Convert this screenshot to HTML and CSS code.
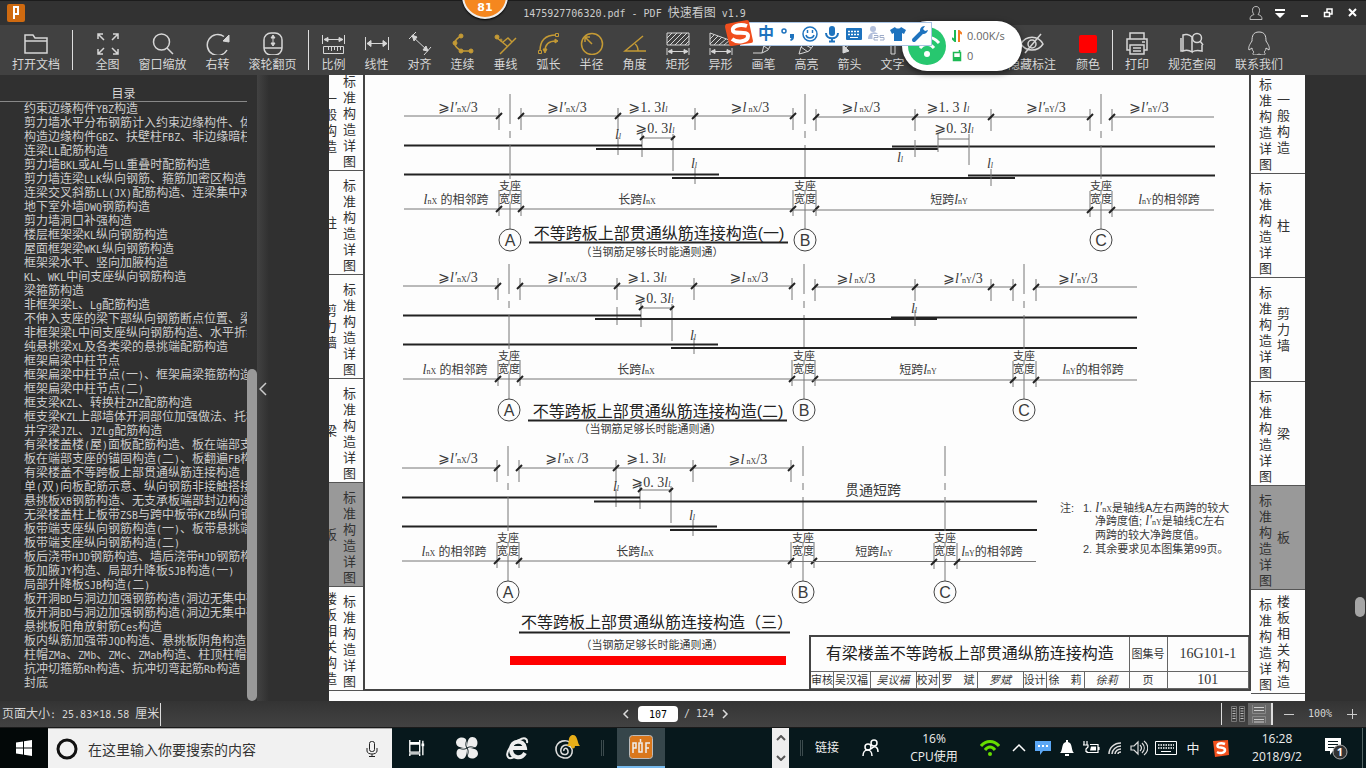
FILE: index.html
```html
<!DOCTYPE html>
<html lang="zh-CN">
<head>
<meta charset="utf-8">
<title>1475927706320.pdf - PDF 快速看图 v1.9</title>
<link rel="stylesheet" href="styles.css">
</head>
<body>
<header class="titlebar">
  <svg class="applogo" viewBox="0 0 18 18"><rect width="18" height="18" rx="2" fill="#cf6a10"/><path d="M7 15V3h4v7H8" fill="none" stroke="#fff" stroke-width="2"/></svg>
  <h1 class="doc-title"><span class="en">1475927706320.pdf - PDF </span>快速看图<span class="en"> v1.9</span></h1>
  <div class="wincontrols">
    <button aria-label="用户"><svg viewBox="0 0 16 16"><path d="M8 1.500c-3 0-3.500 2-3.500 4s1 3.500 1.500 4c-3 1-4 2-4 5h12c0-3-1-4-4-5 .5-.5 1.500-2 1.500-4s-.5-4-3.500-4z" fill="none" stroke="#bbb"/></svg></button>
    <button aria-label="菜单"><svg viewBox="0 0 16 16"><path d="M3 4h10v2H3zM3 8h10l-5 5z" fill="#fff"/></svg></button>
    <button aria-label="最小化"><svg viewBox="0 0 16 16"><path d="M5 10h7v2H5z" fill="#fff"/></svg></button>
    <button aria-label="还原"><svg viewBox="0 0 16 16"><path d="M7 7V4h5v5h-2M4.500 7.500h5v4h-5z" fill="none" stroke="#fff" stroke-width="1.500"/></svg></button>
    <button aria-label="关闭"><svg viewBox="0 0 16 16"><path d="M5 4l7 7M12 4l-7 7" stroke="#fff" stroke-width="2"/></svg></button>
  </div>
</header>

<nav class="toolbar">
  <button class="tool w72"><svg viewBox="0 0 24 24"><path class="m" d="M1 22V4h8l2 3h12v15zM1 10h22"/></svg>打开文档</button>
  <i class="sep"></i>
  <button class="tool w55 first"><svg viewBox="0 0 24 24"><path class="m" d="M2 8V3h5M2 3l6 6M17 3h5v5M22 3l-6 6M2 18v5h5M2 23l6-6M22 18v5h-5M22 23l-6-6"/></svg>全图</button>
  <button class="tool w55"><svg viewBox="0 0 24 24"><circle class="m" cx="10.500" cy="11" r="8"/><path class="m" d="M16 17l6 6"/></svg>窗口缩放</button>
  <button class="tool w55"><svg viewBox="0 0 24 24"><path class="m" d="M18 5.500A10.500 10.500 0 1 0 21 19"/><path d="M17 10l6 1V4z" fill="currentColor"/></svg>右转</button>
  <button class="tool w55"><svg viewBox="0 0 24 24"><rect class="m" x="3" y="2" width="18" height="22" rx="7"/><path class="m" d="M3 17h18"/><path d="M12 5v8M10 7l2-3 2 3zM10 12l2 3 2-3z" fill="currentColor"/></svg>滚轮翻页</button>
  <i class="sep gapped"></i>
  <button class="tool"><svg viewBox="0 0 24 24"><path d="M.5 4v9M22.500 4v9M3 8.500h18"/><path d="M2 8.500l4-2v4zM21 8.500l-4-2v4z" fill="currentColor"/><path d="M1.500 15.500h20v7h-20zM6.500 16v3M9.500 16v4M12.500 16v3M15.500 16v4M18.500 16v3"/></svg>比例</button>
  <button class="tool"><svg viewBox="0 0 24 24"><path d="M.5 6v13M23.500 6v13M2 12.500h20"/><path d="M2 12.500l4-3v6zM22 12.500l-4-3v6z" fill="currentColor"/></svg>线性</button>
  <button class="tool"><svg viewBox="0 0 24 24"><path d="M1 8l7-7M16 24l7-8M4 5l15 14"/><path d="M4 4l5 2-3 4zM20 20l-2-5-3 4z" fill="currentColor"/></svg>对齐</button>
  <button class="tool gold"><svg viewBox="0 0 24 24"><path class="m" d="M10 5C3 9 1 14 9 19M9 20h11"/><g fill="currentColor"><circle cx="10" cy="5" r="2"/><circle cx="4" cy="12" r="2"/><circle cx="10" cy="20" r="2"/><circle cx="20" cy="20" r="2"/></g></svg>连续</button>
  <button class="tool gold"><svg viewBox="0 0 24 24"><path class="m" d="M2 6l11 9M6 23L22 7M9 11l5-4 4 4"/><circle cx="3" cy="6" r="2" fill="currentColor"/><circle cx="7" cy="9" r="1"/></svg>垂线</button>
  <button class="tool gold"><svg viewBox="0 0 24 24"><path class="m" d="M3 20C3 9 9 4 19 4M8 20c0-7 4-10 11-10"/><path d="M18.500 2.500h3v3h-3zM1.500 19.500h3v3h-3z"/><path d="M18 8l3 2-3 2zM6 18l2 4 2-4z" fill="currentColor"/></svg>弧长</button>
  <button class="tool gold"><svg viewBox="0 0 24 24"><circle class="m" cx="12" cy="13" r="10.500"/><path class="m" d="M12 13L5 6M5 11V6h5"/></svg>半径</button>
  <button class="tool gold"><svg viewBox="0 0 24 24"><path class="m" d="M20 5L2 20h21M12 13c3 2 3 4 3 7"/></svg>角度</button>
  <button class="tool"><svg viewBox="0 0 24 24"><path d="M1 2h22v12H1zM1 7l5-5M1 12L11 2M4 14L16 2M9 14L21 2M14 14l9-9M19 14l4-4M1 17v7M23 17v7M3 20.500h18"/><path d="M2 20.500l4-2v4zM22 20.500l-4-2v4z" fill="currentColor"/></svg>矩形</button>
  <button class="tool"><svg viewBox="0 0 24 24"><path d="M1 2l22 8v4H1zM1 8l4-4M1 13l8-8M5 14l8-8M10 14l7-6M15 14l6-5M1 17v7M23 17v7M3 20.500h18"/><path d="M2 20.500l4-2v4zM22 20.500l-4-2v4z" fill="currentColor"/></svg>异形</button>
  <button class="tool"><svg viewBox="0 0 24 24"><path d="M1 22h9M10 22l2-8 5-10 5 4-6 11zM12 15l4 3"/></svg>画笔</button>
  <button class="tool"><svg viewBox="0 0 24 24"><path d="M4 23l2-7 8-10 7 5-7 9-6 2zM6 16l7 5M9 13l7 4"/></svg>高亮</button>
  <button class="tool"><svg viewBox="0 0 24 24"><path d="M20 3L7 18"/><path d="M5 22v-8l6 6z" fill="currentColor"/></svg>箭头</button>
  <button class="tool"><svg viewBox="0 0 24 24"><path d="M3 4h18v3h-7v16h-4V7H3z"/></svg>文字</button>
  <span class="covered"></span>
  <button class="tool w64"><svg viewBox="0 0 24 24"><path class="m" d="M1 13c5-9 17-9 22 0-5 8-17 8-22 0zM21 3L5 22"/><circle class="m" cx="12" cy="13" r="4"/></svg>隐藏标注</button>
  <button class="tool w48"><svg viewBox="0 0 24 24"><rect x="3" y="4" width="18" height="18" rx="2" fill="red" stroke="none"/></svg>颜色</button>
  <i class="sep"></i>
  <button class="tool w48"><svg viewBox="0 0 24 24"><path class="m" d="M5 8V2h14v6M5 19H2V8h20v11h-3M5 14h14v9H5zM8 17h8M8 20h8M17 11h3"/></svg>打印</button>
  <button class="tool w62"><svg viewBox="0 0 24 24"><path class="m" d="M12 6C9 3 5 3 3 4v16c3-1 6-1 9 1V6zM12 21c3-2 6-2 10-1v-6M3 20H1V7"/><circle class="m" cx="17" cy="7" r="4.500"/><path class="m" d="M20 10l3 4"/></svg>规范查阅</button>
  <button class="tool w72"><svg viewBox="0 0 24 24"><path d="M12 1c-6 0-7 4-7 9-2 3-4 6-3 9l3-2c0 2 1 3 2 4-2 2-1 3 1 3h2l2-1 2 1h2c2 0 3-1 1-3 1-1 2-2 2-4l3 2c1-3-1-6-3-9 0-5-1-9-7-9z"/></svg>联系我们</button>
</nav>

<main class="workspace">
  <aside class="outline">
    <h2 class="outline-head">目录</h2>
    <ul class="toc">
      <li><a href="#p">约束边缘构件<span class="en">YBZ</span>构造</a></li>
      <li><a href="#p">剪力墙水平分布钢筋计入约束边缘构件、体</a></li>
      <li><a href="#p">构造边缘构件<span class="en">GBZ</span>、扶壁柱<span class="en">FBZ</span>、非边缘暗柱</a></li>
      <li><a href="#p">连梁<span class="en">LL</span>配筋构造</a></li>
      <li><a href="#p">剪力墙<span class="en">BKL</span>或<span class="en">AL</span>与<span class="en">LL</span>重叠时配筋构造</a></li>
      <li><a href="#p">剪力墙连梁<span class="en">LLK</span>纵向钢筋、箍筋加密区构造</a></li>
      <li><a href="#p">连梁交叉斜筋<span class="en">LL(JX)</span>配筋构造、连梁集中对</a></li>
      <li><a href="#p">地下室外墙<span class="en">DWQ</span>钢筋构造</a></li>
      <li><a href="#p">剪力墙洞口补强构造</a></li>
      <li><a href="#p">楼层框架梁<span class="en">KL</span>纵向钢筋构造</a></li>
      <li><a href="#p">屋面框架梁<span class="en">WKL</span>纵向钢筋构造</a></li>
      <li><a href="#p">框架梁水平、竖向加腋构造</a></li>
      <li><a href="#p"><span class="en">KL</span>、<span class="en">WKL</span>中间支座纵向钢筋构造</a></li>
      <li><a href="#p">梁箍筋构造</a></li>
      <li><a href="#p">非框架梁<span class="en">L</span>、<span class="en">Lg</span>配筋构造</a></li>
      <li><a href="#p">不伸入支座的梁下部纵向钢筋断点位置、梁</a></li>
      <li><a href="#p">非框架梁<span class="en">L</span>中间支座纵向钢筋构造、水平折线</a></li>
      <li><a href="#p">纯悬挑梁<span class="en">XL</span>及各类梁的悬挑端配筋构造</a></li>
      <li><a href="#p">框架扁梁中柱节点</a></li>
      <li><a href="#p">框架扁梁中柱节点<span class="en">(</span>一<span class="en">)</span>、框架扁梁箍筋构造</a></li>
      <li><a href="#p">框架扁梁中柱节点<span class="en">(</span>二<span class="en">)</span></a></li>
      <li><a href="#p">框支梁<span class="en">KZL</span>、转换柱<span class="en">ZHZ</span>配筋构造</a></li>
      <li><a href="#p">框支梁<span class="en">KZL</span>上部墙体开洞部位加强做法、托柱</a></li>
      <li><a href="#p">井字梁<span class="en">JZL</span>、<span class="en">JZLg</span>配筋构造</a></li>
      <li><a href="#p">有梁楼盖楼<span class="en">(</span>屋<span class="en">)</span>面板配筋构造、板在端部支</a></li>
      <li><a href="#p">板在端部支座的锚固构造<span class="en">(</span>二<span class="en">)</span>、板翻遍<span class="en">FB</span>构</a></li>
      <li><a href="#p">有梁楼盖不等跨板上部贯通纵筋连接构造</a></li>
      <li class="current"><a href="#p">单<span class="en">(</span>双<span class="en">)</span>向板配筋示意、纵向钢筋非接触搭接</a></li>
      <li><a href="#p">悬挑板<span class="en">XB</span>钢筋构造、无支承板端部封边构造</a></li>
      <li><a href="#p">无梁楼盖柱上板带<span class="en">ZSB</span>与跨中板带<span class="en">KZB</span>纵向钢</a></li>
      <li><a href="#p">板带端支座纵向钢筋构造<span class="en">(</span>一<span class="en">)</span>、板带悬挑端</a></li>
      <li><a href="#p">板带端支座纵向钢筋构造<span class="en">(</span>二<span class="en">)</span></a></li>
      <li><a href="#p">板后浇带<span class="en">HJD</span>钢筋构造、墙后浇带<span class="en">HJD</span>钢筋构</a></li>
      <li><a href="#p">板加腋<span class="en">JY</span>构造、局部升降板<span class="en">SJB</span>构造<span class="en">(</span>一<span class="en">)</span></a></li>
      <li><a href="#p">局部升降板<span class="en">SJB</span>构造<span class="en">(</span>二<span class="en">)</span></a></li>
      <li><a href="#p">板开洞<span class="en">BD</span>与洞边加强钢筋构造<span class="en">(</span>洞边无集中荷</a></li>
      <li><a href="#p">板开洞<span class="en">BD</span>与洞边加强钢筋构造<span class="en">(</span>洞边无集中荷</a></li>
      <li><a href="#p">悬挑板阳角放射筋<span class="en">Ces</span>构造</a></li>
      <li><a href="#p">板内纵筋加强带<span class="en">JQD</span>构造、悬挑板阴角构造</a></li>
      <li><a href="#p">柱帽<span class="en">ZMa</span>、<span class="en">ZMb</span>、<span class="en">ZMc</span>、<span class="en">ZMab</span>构造、柱顶柱帽纵</a></li>
      <li><a href="#p">抗冲切箍筋<span class="en">Rh</span>构造、抗冲切弯起筋<span class="en">Rb</span>构造</a></li>
      <li><a href="#p">封底</a></li>
    </ul>
    <i class="outline-thumb"></i>
  </aside>

  <section class="viewer" id="p">
    <button class="collapse" aria-label="收起目录"><svg viewBox="0 0 8 14"><path d="M7 1L1 7l6 6" fill="none" stroke="#ccc" stroke-width="1.500"/></svg></button>
    <article class="sheet">
      <div class="strip left">
        <div class="cell"><p class="topic">一般构造</p><p class="std">标准构造详图</p></div>
        <div class="cell"><p class="topic">柱</p><p class="std">标准构造详图</p></div>
        <div class="cell"><p class="topic">剪力墙</p><p class="std">标准构造详图</p></div>
        <div class="cell"><p class="topic">梁</p><p class="std">标准构造详图</p></div>
        <div class="cell shaded"><p class="topic">板</p><p class="std">标准构造详图</p></div>
        <div class="cell"><p class="topic">楼板相关构造</p><p class="std">标准构造详图</p></div>
      </div>
      <div class="frame">
        <svg class="drawing" viewBox="365 75 884 614">
          <defs>
            <g id="tick"><path class="thin" d="M0-8V14"/><path class="slash" d="M-3 3L3-3"/></g>
            <g id="footTick"><path class="thin" d="M0-19V7"/><path class="slash" d="M-3 3L3-3"/></g>
            <g id="axis"><path class="thin" d="M0 94v30M0 131v7M0 145v34M0 190v5M0 204v25"/><circle class="ring" cx="0" cy="240" r="11"/></g>
            <g id="spanAB">
              <path class="thin" d="M404 116H499M522 116H793M642 138H673M642 132V157M673 134V171M618 137V155M695 168V184M404 209H793"/>
              <path class="slash" d="M640 140l4-4M671 140l4-4"/>
              <path class="bar" d="M404 145.500H642M404 174.500H719"/>
              <use href="#tick" x="499" y="116"/><use href="#tick" x="521" y="116"/><use href="#tick" x="618" y="116"/><use href="#tick" x="695" y="116"/><use href="#tick" x="793" y="116"/>
              <use href="#footTick" x="499" y="209"/><use href="#footTick" x="521" y="209"/><use href="#footTick" x="793" y="209"/><use href="#footTick" x="816" y="209"/>
              <use href="#axis" x="510"/><use href="#axis" x="805"/>
            </g>
          </defs>

          <g>
            <use href="#spanAB"/>
            <path class="bar" d="M596 149H938M892 146.500H1215M672 178H1015M968 175.500H1215"/>
            <path class="thin" d="M816 117H1090M1112 117H1214M793 210H1214M938 139H969M938 133V152M969 134V165M915 140V157M991 169V186"/>
            <use href="#tick" x="816" y="117"/><use href="#tick" x="915" y="117"/><use href="#tick" x="991" y="117"/><use href="#tick" x="1090" y="117"/><use href="#tick" x="1112" y="117"/>
            <use href="#footTick" x="1090" y="210"/><use href="#footTick" x="1112" y="210"/><use href="#axis" x="1101"/>
            <g class="math">
              <text x="458" y="112">⩾<tspan class="v">l′</tspan><tspan class="s">nX</tspan>/3</text>
              <text x="567" y="112">⩾<tspan class="v">l′</tspan><tspan class="s">nX</tspan>/3</text>
              <text x="648" y="112">⩾1. 3<tspan class="v">l</tspan><tspan class="s v">l</tspan></text>
              <text x="750" y="112">⩾<tspan class="v">l</tspan><tspan class="s"> nX</tspan>/3</text>
              <text x="861" y="112">⩾<tspan class="v">l</tspan><tspan class="s"> nX</tspan>/3</text>
              <text x="948" y="112">⩾1. 3<tspan class="v"> l</tspan><tspan class="s v">l</tspan></text>
              <text x="1046" y="112">⩾<tspan class="v">l′</tspan><tspan class="s">nY</tspan>/3</text>
              <text x="1149" y="112">⩾<tspan class="v">l′</tspan><tspan class="s">nY</tspan>/3</text>
              <text x="655" y="133">⩾0. 3<tspan class="v">l</tspan><tspan class="s v">l</tspan></text>
              <text x="954" y="133">⩾0. 3<tspan class="v">l</tspan><tspan class="s v">l</tspan></text>
              <text x="618" y="139"><tspan class="v">l</tspan><tspan class="s v">l</tspan></text>
              <text x="694" y="168"><tspan class="v">l</tspan><tspan class="s v">l</tspan></text>
              <text x="900" y="162"><tspan class="v">l</tspan><tspan class="s v">l</tspan></text>
              <text x="990" y="168"><tspan class="v">l</tspan><tspan class="s v">l</tspan></text>
            </g>
            <g class="cn">
              <text x="456" y="204"><tspan class="v">l</tspan><tspan class="s">nX</tspan> 的相邻跨</text>
              <text x="637" y="204">长跨<tspan class="v">l</tspan><tspan class="s">nX</tspan></text>
              <text x="949" y="204">短跨<tspan class="v">l</tspan><tspan class="s">nY</tspan></text>
              <text x="1169" y="204"><tspan class="v">l</tspan><tspan class="s">nY</tspan>的相邻跨</text>
            </g>
            <g class="support">
              <text x="510" y="190">支座</text><text x="510" y="203">宽度</text>
              <text x="805" y="190">支座</text><text x="805" y="203">宽度</text>
              <text x="1101" y="190">支座</text><text x="1101" y="203">宽度</text>
            </g>
            <g class="axisname"><text x="510" y="246">A</text><text x="805" y="246">B</text><text x="1101" y="246">C</text></g>
            <text class="heading" x="659" y="239">不等跨板上部贯通纵筋连接构造(一)</text>
            <path class="under" d="M529 242.500H788"/>
            <text class="caption" x="652" y="256">（当钢筋足够长时能通则通）</text>
          </g>

          <g transform="translate(-1 170)">
            <use href="#spanAB"/>
            <path class="bar" d="M596 149H938M892 147.500H1138M672 178H1138"/>
            <path class="thin" d="M816 117H1014M1037 117H1138M793 210H1138M916 140V156"/>
            <use href="#tick" x="816" y="117"/><use href="#tick" x="916" y="117"/><use href="#tick" x="992" y="117"/><use href="#tick" x="1014" y="117"/><use href="#tick" x="1037" y="117"/>
            <use href="#footTick" x="1014" y="210"/><use href="#footTick" x="1037" y="210"/><use href="#axis" x="1025"/>
            <g class="math">
              <text x="459" y="112">⩾<tspan class="v">l′</tspan><tspan class="s">nX</tspan>/3</text>
              <text x="568" y="112">⩾<tspan class="v">l′</tspan><tspan class="s">nX</tspan>/3</text>
              <text x="648" y="112">⩾1. 3<tspan class="v">l</tspan><tspan class="s v">l</tspan></text>
              <text x="750" y="112">⩾<tspan class="v">l</tspan><tspan class="s"> nX</tspan>/3</text>
              <text x="857" y="113">⩾<tspan class="v">l</tspan><tspan class="s"> nX</tspan>/3</text>
              <text x="964" y="113">⩾<tspan class="v">l′</tspan><tspan class="s">nY</tspan>/3</text>
              <text x="1079" y="113">⩾<tspan class="v">l′</tspan><tspan class="s">nY</tspan>/3</text>
              <text x="655" y="133">⩾0. 3<tspan class="v">l</tspan><tspan class="s v">l</tspan></text>
              <text x="694" y="170"><tspan class="v">l</tspan><tspan class="s v">l</tspan></text>
              <text x="915" y="143"><tspan class="v">l</tspan><tspan class="s v">l</tspan></text>
            </g>
            <g class="cn">
              <text x="456" y="204"><tspan class="v">l</tspan><tspan class="s">nX</tspan> 的相邻跨</text>
              <text x="637" y="204">长跨<tspan class="v">l</tspan><tspan class="s">nX</tspan></text>
              <text x="919" y="204">短跨<tspan class="v">l</tspan><tspan class="s">nY</tspan></text>
              <text x="1094" y="204"><tspan class="v">l</tspan><tspan class="s">nY</tspan>的相邻跨</text>
            </g>
            <g class="support">
              <text x="510" y="190">支座</text><text x="510" y="203">宽度</text>
              <text x="805" y="190">支座</text><text x="805" y="203">宽度</text>
              <text x="1025" y="190">支座</text><text x="1025" y="203">宽度</text>
            </g>
            <g class="axisname"><text x="510" y="246">A</text><text x="805" y="246">B</text><text x="1025" y="246">C</text></g>
            <text class="heading" x="659" y="247">不等跨板上部贯通纵筋连接构造(二)</text>
            <path class="under" d="M529 250.500H788"/>
            <text class="caption" x="651" y="263">（当钢筋足够长时能通则通）</text>
          </g>

          <g transform="translate(-2 352)">
            <use href="#spanAB"/>
            <path class="bar" d="M596 149.500H1039M672 178H1039"/>
            <path class="thin" d="M793 209.500H1038"/>
            <use href="#footTick" x="936" y="210"/><use href="#footTick" x="959" y="210"/><use href="#axis" x="947"/>
            <g class="math">
              <text x="460" y="111">⩾<tspan class="v">l′</tspan><tspan class="s">nX</tspan>/3</text>
              <text x="569" y="111">⩾<tspan class="v">l′</tspan><tspan class="s">nX</tspan> /3</text>
              <text x="648" y="111">⩾1. 3<tspan class="v">l</tspan><tspan class="s v">l</tspan></text>
              <text x="750" y="112">⩾<tspan class="v">l</tspan><tspan class="s"> nX</tspan>/3</text>
              <text x="653" y="135">⩾0. 3<tspan class="v">l</tspan><tspan class="s v">l</tspan></text>
              <text x="618" y="139"><tspan class="v">l</tspan><tspan class="s v">l</tspan></text>
              <text x="694" y="168"><tspan class="v">l</tspan><tspan class="s v">l</tspan></text>
            </g>
            <g class="cn">
              <text x="456" y="204"><tspan class="v">l</tspan><tspan class="s">nX</tspan> 的相邻跨</text>
              <text x="637" y="204">长跨<tspan class="v">l</tspan><tspan class="s">nX</tspan></text>
              <text x="876" y="204">短跨<tspan class="v">l</tspan><tspan class="s">nY</tspan></text>
              <text x="994" y="204"><tspan class="v">l</tspan><tspan class="s">nY</tspan>的相邻跨</text>
            </g>
            <text class="through" x="875" y="143">贯通短跨</text>
            <g class="support">
              <text x="510" y="190">支座</text><text x="510" y="203">宽度</text>
              <text x="805" y="190">支座</text><text x="805" y="203">宽度</text>
              <text x="947" y="190">支座</text><text x="947" y="203">宽度</text>
            </g>
            <g class="axisname"><text x="510" y="246">A</text><text x="805" y="246">B</text><text x="947" y="246">C</text></g>
            <text class="heading" x="659" y="276">不等跨板上部贯通纵筋连接构造（三）</text>
            <path class="under" d="M521 280.500H792"/>
            <text class="caption" x="654" y="297">（当钢筋足够长时能通则通）</text>
          </g>

          <rect x="510" y="656" width="276" height="9" fill="red"/>
          <g class="note">
            <text x="1060" y="512">注:</text>
            <text x="1083" y="512">1. <tspan class="v">l′</tspan><tspan class="s">nX</tspan>是轴线A左右两跨的较大</text>
            <text x="1095" y="525">净跨度值; <tspan class="v">l′</tspan><tspan class="s">nY</tspan>是轴线C左右</text>
            <text x="1095" y="539">两跨的较大净跨度值。</text>
            <text x="1083" y="553">2. 其余要求见本图集第99页。</text>
          </g>
        </svg>
        <table class="titleblock">
          <colgroup><col class="c23"><col class="c37"><col class="c46"><col class="c23"><col class="c38"><col class="c46"><col class="c23"><col class="c38"><col class="c45"><col class="c38"><col></colgroup>
          <tr class="main"><th colspan="9">有梁楼盖不等跨板上部贯通纵筋连接构造</th><td>图集号</td><td class="num">16G101-1</td></tr>
          <tr class="signs"><td>审核</td><td>吴汉福</td><td class="sig">吴议福</td><td>校对</td><td>罗　斌</td><td class="sig">罗斌</td><td>设计</td><td>徐　莉</td><td class="sig">徐莉</td><td>页</td><td class="num">101</td></tr>
        </table>
      </div>
      <div class="strip right">
        <div class="cell"><p class="std">标准构造详图</p><p class="topic">一般构造</p></div>
        <div class="cell"><p class="std">标准构造详图</p><p class="topic">柱</p></div>
        <div class="cell"><p class="std">标准构造详图</p><p class="topic">剪力墙</p></div>
        <div class="cell"><p class="std">标准构造详图</p><p class="topic">梁</p></div>
        <div class="cell shaded"><p class="std">标准构造详图</p><p class="topic">板</p></div>
        <div class="cell"><p class="std">标准构造详图</p><p class="topic">楼板相关构造</p></div>
      </div>
    </article>
    <i class="viewer-thumb"></i>
  </section>
</main>

<footer class="status">
  <p class="size">页面大小<span class="en">: 25.83</span>×<span class="en">18.58 </span>厘米</p>
  <div class="pager">
    <button aria-label="上一页"><svg viewBox="0 0 8 10"><path d="M6 1L2 5l4 4" fill="none" stroke="#ddd" stroke-width="1.500"/></svg></button>
    <input class="en" aria-label="页码" value="107">
    <span class="en total">/ 124</span>
    <button aria-label="下一页"><svg viewBox="0 0 8 10"><path d="M2 1l4 4-4 4" fill="none" stroke="#ddd" stroke-width="1.500"/></svg></button>
  </div>
  <div class="zoombar">
    <button class="mode" aria-label="双页"><svg viewBox="0 0 18 18"><path d="M2.500 1.500h5v15h-5zM10.500 1.500h5v15h-5z" fill="none" stroke="#777"/><path d="M5 3v12M13 3v12" stroke="#bbb" stroke-width="3" stroke-dasharray="1 1.500"/></svg></button>
    <button class="mode on" aria-label="连续"><svg viewBox="0 0 18 18"><path d="M2.500 0v8.500h13V0M2.500 18v-6.500h13V18" fill="none" stroke="#888"/><path d="M4 2.500h10M4 5.500h10M4 14.500h10M4 17h10" stroke="#ccc"/></svg></button>
    <button class="zoomstep" aria-label="缩小"><svg viewBox="0 0 10 10"><path d="M0 5.500h10" stroke="#ccc"/></svg></button>
    <span class="en percent">100%</span>
    <button class="zoomstep" aria-label="放大"><svg viewBox="0 0 10 10"><path d="M0 5.500h10M5.500 0v10" stroke="#ccc"/></svg></button>
  </div>
</footer>

<footer class="taskbar">
  <button class="t48 start" aria-label="开始"><svg viewBox="0 0 18 18"><path d="M1 3.500l7-1V8.500H1zM9 2.300l8-1.300v7.500H9zM1 9.500h7v6l-7-1zM9 9.500h8V17l-8-1.300z" fill="#fff"/></svg></button>
  <label class="search">
    <svg class="ring20" viewBox="0 0 22 22"><circle cx="11" cy="11" r="9" fill="none" stroke="#111" stroke-width="3"/></svg>
    <input type="search" placeholder="在这里输入你要搜索的内容">
    <svg class="mic" viewBox="0 0 16 18"><rect x="5.500" y="1.500" width="5" height="10" rx="2" fill="none" stroke="#222"/><path d="M3 8v3c0 4 10 4 10 0V8M8 14v3M5 16.500h6" fill="none" stroke="#222"/></svg>
  </label>
  <button class="t50" aria-label="任务视图"><svg viewBox="0 0 20 20"><path d="M2 5.500h11v9H2zM2 1v3h11V1M2 19v-2.500h11V19M16.500 2v16" fill="none" stroke="#fff" stroke-width="1.500"/><path d="M15 5h3v3h-3z" fill="#fff"/></svg></button>
  <button class="t50" aria-label="四叶草"><svg class="i24" viewBox="0 0 24 24"><g fill="#eee"><path d="M12 12C9 12 1 12 1 6.500S11-1 12 6z"/><path d="M12 12c0-3 0-11 5.500-11S25 11 18 12z"/><path d="M12 12c3 0 11 0 11 5.500S13 25 12 18z"/><path d="M12 12c0 3 0 11-5.500 11S-1 13 6 12z"/></g><path d="M12 12c-2-3-1-6 0-8M12 12c3-2 6-1 8 0M12 12c2 3 1 6 0 8M12 12c-3 2-6 1-8 0" fill="none" stroke="#07181c"/></svg></button>
  <button class="t50" aria-label="浏览器"><svg class="i24" viewBox="0 0 24 24"><path d="M20 17c-4 7-14 5-14-4S19 3 20 12H7" fill="none" stroke="#eee" stroke-width="4"/><path d="M22 7c1-5-3-6-8-3C6 8 0 17 3 21c1 2 4 1 6 0" fill="none" stroke="#eee" stroke-width="2"/></svg></button>
  <button class="t50" aria-label="助手"><svg class="i28" viewBox="0 0 28 28"><path d="M19 11c-4-8-17-4-16 5s14 11 16 3-9-11-11-4 8 7 7 2-5-2-4 0" fill="none" stroke="#ddd" stroke-width="1.600"/><path d="M14 12c3-2 0-9 5-11 6-1 5 8 8 11z" fill="#e8ae18"/><circle cx="20" cy="12.500" r="2" fill="#e8ae18"/></svg></button>
  <i class="grip g-left"></i>
  <button class="t48 active" aria-label="PDF"><svg class="i24" viewBox="0 0 24 24"><rect x=".5" y=".5" width="23" height="23" rx="3" fill="#d9771c" stroke="#bbb"/><path d="M4 18V8h3v5H4M10 17V8h3v9zM17 18V8h4M17 13h3M11.500 4v3" fill="none" stroke="#eee" stroke-width="1.500"/></svg></button>
  <span class="grow"></span>
  <span class="spin"><button aria-label="向上"><svg viewBox="0 0 10 6"><path d="M1 5l4-4 4 4" fill="none" stroke="#555" stroke-width="2"/></svg></button><button aria-label="向下"><svg viewBox="0 0 10 6"><path d="M1 1l4 4 4-4" fill="none" stroke="#555" stroke-width="2"/></svg></button></span>
  <i class="grip g-right"></i>
  <a class="links" href="#p">链接</a>
  <button class="t48" aria-label="人脉"><svg viewBox="0 0 18 18"><g fill="none" stroke="#fff" stroke-width="1.500"><circle cx="6" cy="8" r="3"/><circle cx="12" cy="4" r="3"/><path d="M1 17c0-8 9-8 9 0M9 10c4-4 7-2 7 3"/></g></svg></button>
  <p class="cpu">16%<br>CPU使用</p>
  <button class="t34" aria-label="无线"><svg class="i20" viewBox="0 0 20 20"><path d="M1 8c5-6 13-6 18 0M5 12c3-4 7-4 10 0" fill="none" stroke="#6d0" stroke-width="3"/><circle cx="10" cy="16" r="2" fill="#6d0"/></svg></button>
  <button class="t24" aria-label="展开"><svg viewBox="0 0 18 18"><path d="M3 12l6-6 6 6" fill="none" stroke="#fff" stroke-width="1.500"/></svg></button>
  <button class="t24" aria-label="消息"><svg viewBox="0 0 18 18"><path d="M1 2h16v10H9l-3 4v-4H1z" fill="#5ba7f5"/><path d="M4 7h2M8 7h2M12 7h2" stroke="#fff" stroke-width="2"/></svg></button>
  <button class="t24" aria-label="通知"><svg viewBox="0 0 18 18"><path d="M2 14c3-2 1-10 6-11V1h2v2c5 1 3 9 6 11zM7 15h4v2H7z" fill="#fff"/></svg></button>
  <button class="t24" aria-label="电池"><svg viewBox="0 0 18 18"><path d="M8 5.500h8v8H5V12M17 8v3M2 2v4M5 2v4M1 6h5v2L4 10v3" fill="none" stroke="#fff" stroke-width="1.200"/><path d="M9 7.500h5v4H8z" fill="#fff"/></svg></button>
  <button class="t24" aria-label="网络"><svg viewBox="0 0 18 18"><path d="M3 15C3 9 8 4 15 4M6 15c0-4 4-8 9-8M9 15c0-3 3-5 6-5M12 15c0-1 1-2 3-2" fill="none" stroke="#ddd" stroke-width="1.500"/></svg></button>
  <button class="t24" aria-label="音量"><svg viewBox="0 0 18 18"><path d="M1 7h3l4-4v12l-4-4H1zM10 6c2 2 2 4 0 6M12 4c3 3 3 7 0 10M14 2c5 4 5 10 0 14" fill="none" stroke="#ddd" stroke-width="1.200"/></svg></button>
  <button class="t30" aria-label="键盘"><svg class="kb" viewBox="0 0 22 14"><path d="M.5.500h21v13H.5z" fill="none" stroke="#fff"/><path d="M3 4h16M3 7h16" stroke="#fff" stroke-width="1.500" stroke-dasharray="1.500 1"/><path d="M6 10.500h10" stroke="#fff"/></svg></button>
  <button class="t24 ime">中</button>
  <button class="t32" aria-label="搜狗"><svg viewBox="0 0 18 18"><path d="M1 2l15-1 1 15-14 2z" fill="#f4511e"/><path d="M13 5C8 3 4 5 6 8c2 1 7 0 7 3s-5 4-8 2" fill="none" stroke="#fff" stroke-width="2.500"/></svg></button>
  <p class="clock">16:28<br>2018/9/2</p>
  <button class="t38" aria-label="操作中心"><svg class="i24" viewBox="0 0 24 24"><path d="M1 2h16v13h-8l-3 4v-4H1z" fill="#fff"/><path d="M4 5.500h10M4 8.500h10M4 11.500h7" stroke="#07181c"/><circle cx="16" cy="16" r="7" fill="#333" stroke="#aaa"/><text x="16" y="20" class="badge-num">1</text></svg></button>
  <i class="peek"></i>
</footer>

<div class="score">81</div>

<div class="netpill">
  <svg class="wifi" viewBox="0 0 38 38"><circle cx="19" cy="19" r="19" fill="#27c76f"/><path d="M7 16c7-8 17-8 24 0M12 21c4-5 10-5 14 0" fill="none" stroke="#fff" stroke-width="3"/><circle cx="19" cy="27" r="3" fill="#fff"/></svg>
  <div class="netinfo">
    <p><svg viewBox="0 0 10 12"><path d="M3 0v11L0 8" fill="none" stroke="#1db954" stroke-width="2"/><path d="M7 12V1l3 3" fill="none" stroke="#f57c1f" stroke-width="2"/></svg>0.00K/s</p>
    <p><svg viewBox="0 0 10 12"><path d="M1.500 2.500h7v8h-7zM7.500 0v2" fill="none" stroke="#1db954" stroke-width="1.500"/><path d="M2 7h6v3H2z" fill="#1db954"/></svg>0</p>
  </div>
</div>

<div class="imebar">
  <svg class="sogou" viewBox="0 0 28 28"><path d="M1 5L22 1q2 0 2 2l4 19q0 2-2 2L7 27q-3 0-3-2L0 8q0-2 1-3z" fill="#f04e1e"/><path d="M22 7C14 4 6 8 8 12s15-1 15 5-11 7-16 3" fill="none" stroke="#fff" stroke-width="4"/></svg>
  <button>中</button>
  <button aria-label="标点"><svg viewBox="0 0 18 18"><circle cx="5" cy="6" r="2" fill="none" stroke="#1e73be" stroke-width="1.500"/><path d="M11 9h4v3c0 2-1 3-3 4l-1-1 1.500-2H11z" fill="#1e73be"/></svg></button>
  <button aria-label="表情"><svg viewBox="0 0 18 18"><circle cx="9" cy="9" r="7" fill="none" stroke="#1e73be" stroke-width="1.500"/><path d="M6.500 5v3M11.500 5v3M5 10c1 4 7 4 8 0" fill="none" stroke="#1e73be" stroke-width="1.500"/></svg></button>
  <button aria-label="语音"><svg viewBox="0 0 18 18"><rect x="6" y="1" width="6" height="10" rx="3" fill="#1e73be"/><path d="M3 8c0 7 12 7 12 0M9 13v4M6 16.500h6" fill="none" stroke="#1e73be" stroke-width="2"/></svg></button>
  <button aria-label="软键盘"><svg viewBox="0 0 18 18"><rect x="1" y="3" width="16" height="12" rx="1" fill="#1e73be"/><path d="M3 6.500h12M3 9.500h12" stroke="#fff" stroke-width="1.500" stroke-dasharray="2 1"/><path d="M5 12.500h8" stroke="#fff"/></svg></button>
  <button aria-label="账户"><svg viewBox="0 0 18 18"><circle cx="6" cy="4" r="3" fill="#b3c0dc"/><path d="M1 14c0-8 10-8 10-4v4z" fill="#b3c0dc"/><path d="M5.500 9h12v7h-12z" fill="#fff"/><path d="M7 10.500h4v2H7v2.500h4M17 10.500h-4v2h4V15h-4" fill="none" stroke="#9eacc9"/></svg></button>
  <button aria-label="皮肤"><svg viewBox="0 0 18 18"><path d="M6 2c1 2 5 2 6 0l5 3-2 4-2-1v8H5V8L3 9 1 5z" fill="#1e73be"/></svg></button>
  <button aria-label="工具"><svg viewBox="0 0 18 18"><path d="M3 15l7-7" stroke="#1e73be" stroke-width="4" stroke-linecap="round"/><path d="M14 1c-5 0-6 5-4 7s6 1 7-3l-3 1-2-2z" fill="#1e73be"/></svg></button>
</div>
</body>
</html>
```
FILE: styles.css
```css
* { box-sizing: border-box; }

body {
  margin: 0;
  height: 100vh;
  min-height: 600px;
  display: flex;
  flex-direction: column;
  overflow: hidden;
  background: #303030;
  color: #d6d6d6;
  font: 12px/14px "Liberation Sans", "Noto Sans CJK SC", sans-serif;
}

h1, h2, p, ul { margin: 0; padding: 0; font-size: 12px; font-weight: 400; }
ul { list-style: none; }
a { color: inherit; text-decoration: none; }
button {
  margin: 0;
  padding: 0;
  border: 0;
  background: none;
  color: inherit;
  font: inherit;
  display: flex;
  align-items: center;
  justify-content: center;
  flex: none;
}
svg { display: block; flex: none; }
.en { font-family: "DejaVu Sans Mono", monospace; font-size: 10px; white-space: pre; }

/* Title bar */
.titlebar {
  flex: none;
  height: 25px;
  display: flex;
  align-items: center;
  padding: 0 2px 0 7px;
  background: #323232;
  border-top: 1px solid #1c1c1c;
}
.applogo { width: 18px; height: 18px; }
.doc-title { flex: 1; text-align: center; color: #ccc; }
.wincontrols { display: flex; }
.wincontrols button { width: 24px; height: 24px; }
.wincontrols svg { width: 16px; height: 16px; }

/* Toolbar */
.toolbar {
  flex: none;
  height: 50px;
  display: flex;
  background: #414141;
  overflow: hidden;
}
.tool {
  width: 43px;
  flex-direction: column;
  justify-content: flex-start;
  padding-top: 6px;
  line-height: 20px;
  white-space: nowrap;
}
.tool svg {
  width: 24px;
  height: 24px;
  fill: none;
  stroke: currentColor;
}
.tool .m { stroke-width: 1.5; }
.tool.gold svg { color: #c49a35; }
.w48 { width: 48px; }
.w55 { width: 55px; }
.w62 { width: 62px; }
.w64 { width: 64px; }
.w72 { width: 72px; }
.first { margin-left: 7px; }
.covered { flex: none; width: 86px; }
.sep { flex: none; width: 1px; height: 40px; margin-top: 5px; background: #ddd; }
.sep.gapped { margin-left: 8px; margin-right: 3px; }

/* Outline */
.workspace { flex: 1; min-height: 0; display: flex; }
.outline { flex: none; width: 257px; position: relative; padding-right: 10px; overflow: hidden; }
.outline-head {
  height: 27px;
  padding-top: 12px;
  text-align: center;
  border-bottom: 1px solid #888;
}
.toc { overflow: hidden; white-space: nowrap; padding-left: 21px; color: #ccc; }
.toc li { height: 14px; padding-left: 3px; }
.toc .current { background: #262626; }
.outline-thumb {
  position: absolute;
  right: 0;
  bottom: 0;
  width: 10px;
  height: 53%;
  border-radius: 5px;
  background: #999;
}

/* Viewer */
.viewer {
  flex: 1;
  min-width: 0;
  position: relative;
  display: flex;
  padding: 0 61px 0 72px;
  background: linear-gradient(90deg, #424242, #303030 12px);
}
.collapse { position: absolute; left: 2px; top: 49%; width: 8px; height: 14px; }
.collapse svg { width: 8px; height: 14px; }
.viewer-thumb {
  position: absolute;
  right: 1px;
  top: 522px;
  width: 10px;
  height: 20px;
  border-radius: 5px;
  background: #a5a5a5;
}
.sheet { flex: 1; min-width: 0; display: flex; background: #fdfdfd; color: #333; overflow: hidden; }
.frame {
  flex: 1;
  min-width: 0;
  display: grid;
  margin-bottom: 10px;
  border: 2px solid #444;
  border-top: 0;
}
.drawing { grid-area: 1 / 1; width: 100%; height: 100%; }

.strip { flex: none; display: flex; flex-direction: column; font-size: 13px; line-height: 16px; }
.strip .cell { flex: 1; display: flex; border-bottom: 1px solid #555; }
.strip .cell:first-child { flex: none; align-items: flex-end; }
.strip .topic { align-self: center; }
.strip p { flex: none; width: 13px; font-size: 13px; word-break: break-all; }
.strip .std { align-self: flex-end; }
.strip .shaded { background: #999; }
.left { width: 34px; padding-bottom: 10px; }
.left .cell:first-child { height: 96px; }
.left .topic { margin-left: -5px; margin-right: 6px; }
.right { width: 54px; padding-bottom: 7px; }
.right .cell { padding-left: 8px; gap: 5px; }
.right .cell:first-child { height: 99px; }

/* Section drawing */
.thin { fill: none; stroke: #777; stroke-width: 1; }
.bar { fill: none; stroke: #222; stroke-width: 2; }
.slash { fill: none; stroke: #222; stroke-width: 2; }
.ring { fill: #fdfdfd; stroke: #444; stroke-width: 1; }
.under { stroke: #222; stroke-width: 2; }
.drawing text { text-anchor: middle; fill: #3a3a3a; }
.math text { font: 14px "Liberation Serif", "DejaVu Sans", serif; }
.drawing .v { font-family: "Liberation Serif", serif; font-style: italic; font-size: 14px; }
.drawing .s { font-family: "Liberation Serif", serif; font-size: 8px; }
.cn text { font-size: 12px; }
.support text { font-size: 11px; }
.axisname text { font: 16px "Liberation Sans", sans-serif; }
.drawing .heading { font-size: 16px; fill: #222; }
.drawing .caption { font-size: 11px; }
.drawing .through { font-size: 14px; }
.drawing .note text { font-size: 11px; text-anchor: start; }

.titleblock {
  grid-area: 1 / 1;
  align-self: end;
  justify-self: end;
  width: 440px;
  table-layout: fixed;
  border-collapse: collapse;
  background: #fdfdfd;
  border-top: 2px solid #444;
  border-left: 2px solid #444;
  font-size: 11px;
  line-height: 16px;
  text-align: center;
}
.titleblock th, .titleblock td { padding: 0; border: 1px solid #666; font-weight: 400; white-space: nowrap; }
.titleblock th { font-size: 16px; color: #222; }
.main { height: 36px; }
.signs { height: 17px; }
.titleblock .num { font: 14px/16px "Liberation Serif", serif; }
.titleblock .sig { font-style: italic; }
.c23 { width: 23px; }
.c37 { width: 37px; }
.c38 { width: 38px; }
.c45 { width: 45px; }
.c46 { width: 46px; }

/* Status bar */
.status {
  flex: none;
  height: 27px;
  display: grid;
  grid-template-columns: 1fr auto 1fr;
  align-items: center;
  padding: 0 9px 0 2px;
  background: linear-gradient(#343434, #424242);
  border-bottom: 1px solid #1a1a1a;
}
.size { justify-self: start; line-height: 22px; padding-right: 1px; border-right: 1px solid #ddd; white-space: nowrap; }
.pager { display: flex; align-items: center; margin-right: 8px; }
.pager svg { width: 8px; height: 10px; }
.pager input {
  width: 40px;
  height: 16px;
  margin: 0 6px 0 8px;
  padding: 0;
  border: 0;
  border-radius: 4px;
  background: #fff;
  text-align: center;
}
.total { margin-right: 7px; }
.zoombar { justify-self: end; display: flex; align-items: center; height: 22px; border-left: 1px solid #ddd; padding-left: 6px; }
.mode { width: 20px; height: 22px; }
.mode.on { width: 25px; height: 22px; background: #666; border-right: 2px solid #ddd; }
.mode svg { width: 18px; height: 18px; }
.zoomstep svg { width: 10px; height: 10px; }
.mode.on + .zoomstep { margin-left: 11px; }
.percent { margin: 0 15px 0 14px; }

/* Taskbar */
.taskbar {
  flex: none;
  height: 40px;
  display: flex;
  align-items: stretch;
  background: #07181c;
  color: #eee;
  font: 12px/18px "Open Sans", "Noto Sans CJK SC", sans-serif;
}
.taskbar button svg { width: 18px; height: 18px; }
.taskbar button .i20 { width: 20px; height: 20px; }
.taskbar button .i24 { width: 24px; height: 24px; }
.taskbar button .i28 { width: 28px; height: 28px; }
.taskbar button .kb { width: 22px; height: 14px; }
.t24 { width: 24px; }
.t30 { width: 30px; }
.t32 { width: 32px; }
.t34 { width: 34px; }
.t38 { width: 38px; }
.t48 { width: 48px; }
.t50 { width: 50px; }
.start { background: #030808; }
.search {
  flex: none;
  width: 344px;
  display: flex;
  align-items: center;
  padding: 0 12px 0 8px;
  background: #f1f1f1;
  border-top: 1px solid #aaa;
}
.ring20 { width: 22px; height: 22px; }
.mic { width: 16px; height: 18px; }
.search input {
  flex: 1;
  min-width: 0;
  padding: 0 0 0 10px;
  border: 0;
  background: none;
  font: 14px "Noto Sans CJK SC", sans-serif;
}
.search input::placeholder { color: #333; opacity: 1; }
.grip { flex: none; align-self: center; width: 3px; height: 16px; border: 1px solid #3c4b4e; border-width: 0 1px; }
.g-left { margin: 0 13px 0 9px; }
.g-right { margin: 0 12px 0 11px; }
.active { background: #36464b; border-bottom: 2px solid #76b9ed; }
.grow { flex: 1; }
.spin { flex: none; width: 17px; display: flex; flex-direction: column; justify-content: space-around; align-items: center; background: #eee; }
.taskbar .spin svg { width: 10px; height: 6px; }
.links { flex: none; width: 32px; align-self: center; }
.cpu, .clock { flex: none; text-align: center; padding-top: 2px; white-space: nowrap; }
.cpu { width: 78px; }
.clock { width: 80px; }
.ime { font-size: 13px; }
.badge-num { font: bold 11px "Open Sans", sans-serif; fill: #fff; text-anchor: middle; }
.peek { flex: none; width: 4px; margin-left: 7px; border-left: 1px solid #566; }

/* Floating desktop widgets */
.score {
  position: absolute;
  left: 462px;
  top: -27px;
  width: 46px;
  height: 46px;
  padding-top: 25px;
  border: 2px solid #eee;
  border-radius: 50%;
  background: #f5871f;
  box-shadow: 0 1px 2px #000;
  color: #fff;
  font: bold 11px/16px "DejaVu Sans", sans-serif;
  text-align: center;
}
.netpill {
  position: absolute;
  left: 902px;
  top: 21px;
  height: 50px;
  width: 120px;
  display: flex;
  align-items: center;
  gap: 6px;
  padding-left: 6px;
  border-radius: 25px;
  background: #fff;
  box-shadow: 0 2px 6px rgba(0, 0, 0, .6);
  color: #666;
}
.wifi { width: 38px; height: 38px; }
.netinfo p { display: flex; align-items: center; gap: 5px; font: 11px/20px "Open Sans", sans-serif; }
.netinfo svg { width: 10px; height: 12px; }
.imebar {
  position: absolute;
  left: 740px;
  top: 22px;
  height: 24px;
  display: flex;
  align-items: center;
  padding-left: 14px;
  background: #fff;
  border: 1px solid #a9c4e4;
}
.imebar button { width: 22px; color: #1e73be; font-size: 16px; font-weight: 700; line-height: 22px; }
.imebar button svg { width: 18px; height: 18px; }
.sogou { position: absolute; left: -16px; top: -4px; width: 28px; height: 28px; }
```
